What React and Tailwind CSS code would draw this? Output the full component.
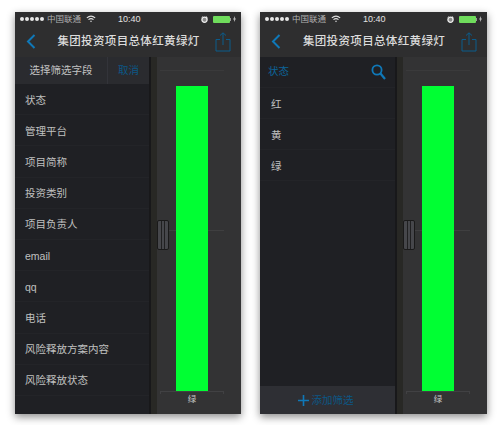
const FONT = { fontFamily: '"Liberation Sans","Noto Sans CJK SC",sans-serif' };

function Signal() {
  return (
    <span className="flex gap-[1px]">
      {[0, 1, 2, 3, 4].map((i) => (
        <span key={i} className="w-[4px] h-[4px] rounded-full bg-[#e8e8e8]" />
      ))}
    </span>
  );
}

function StatusBar() {
  return (
    <div className="h-[14px] flex items-center pl-[5px] pr-[5px] text-[#d8d8d8] shrink-0">
      <div className="flex items-center gap-[3px] w-[90px]">
        <Signal />
        <span className="text-[8.5px] leading-none text-[#b0b0b0] whitespace-nowrap">中国联通</span>
        <svg width="10" height="8" viewBox="0 0 12 9" className="ml-[2px]" fill="none" stroke="#e0e0e0" strokeWidth="1.3">
          <path d="M1 3.2C4 .6 8 .6 11 3.2" />
          <path d="M3 5.2C4.8 3.8 7.2 3.8 9 5.2" />
          <path d="M6 8.4 4.8 7c.7-.5 1.7-.5 2.4 0z" fill="#e0e0e0" stroke="none" />
        </svg>
      </div>
      <span className="flex-1 text-[9px] text-[#e2e2e2] ml-[8px] leading-none">10:40</span>
      <div className="flex items-center">
        <svg width="7" height="7" viewBox="0 0 7 7" className="mr-[5px]">
          <circle cx="3.5" cy="3.7" r="2.6" fill="#8a8a8a" stroke="#ececec" strokeWidth="1.3" />
          <path d="M.6 1.6 1.8.6M6.4 1.6 5.2.6" stroke="#ececec" strokeWidth="0.9" />
        </svg>
        <span className="w-[17px] h-[7px] bg-[#6fdc5c] rounded-[1px]" />
        <span className="w-[1px] h-[3px] bg-[#999] mr-[2px]" />
        <svg width="3" height="6" viewBox="0 0 3 6">
          <path d="M2 0 0 3.4h1.1L1 6l2-3.4H1.9z" fill="#bdbdbd" />
        </svg>
      </div>
    </div>
  );
}

function NavBar() {
  return (
    <div className="h-[31px] flex items-center bg-[#2e2e2f] shrink-0">
      <svg width="10" height="15" viewBox="0 0 10 15" className="ml-[11px] shrink-0" fill="none" stroke="#0f78b8" strokeWidth="2">
        <path d="M8.5 1 2 7.5 8.5 14" />
      </svg>
      <div className="flex-1 text-center text-[#dcdcdc] text-[11.5px] font-medium tracking-[0.35px] whitespace-nowrap pl-[6px]">
        集团投资项目总体红黄绿灯
      </div>
      <svg width="16" height="20" viewBox="0 0 16 20" className="mr-[10px] shrink-0" fill="none" stroke="#0b5c8c" strokeWidth="1">
        <path d="M5 7.5H1v11.5h14V7.5h-4" />
        <path d="M8 13V1M5 3.5 8 .8l3 2.7" />
      </svg>
    </div>
  );
}

function Chart() {
  return (
    <div className="flex-1 flex bg-[#333334] min-w-0">
      <div className="w-[8px] bg-[#282825] border-l-2 border-[#18181a] shrink-0 relative">
        <div className="absolute left-[6px] top-[163px] w-[12px] h-[30px] bg-[#46474b] border border-[#1a1a1a] rounded-[2px] flex justify-evenly z-10">
          <span className="w-[1px] h-full bg-[#202021]" />
          <span className="w-[1px] h-full bg-[#202021]" />
        </div>
      </div>
      <div className="flex-1 relative">
        <div className="absolute left-[3px] top-[13px] w-[64px] border-t border-[#3a3a3b]" />
        <div className="absolute left-[3px] top-[173px] w-[64px] border-t border-[#3f3f40]" />
        <div className="absolute left-[19px] top-[29px] w-[32px] h-[305px] bg-[#00ff33]" />
        <div className="absolute left-[3px] top-[334px] w-[64px] h-[3px] border-t border-l border-r border-[#414143]" />
        <div className="absolute left-[19px] top-[336px] w-[32px] text-center text-[8.5px] leading-[12px] text-[#c4c4c4]">绿</div>
      </div>
    </div>
  );
}

function LeftPanel() {
  const rows = ["状态", "管理平台", "项目简称", "投资类别", "项目负责人", "email", "qq", "电话", "风险释放方案内容", "风险释放状态"];
  return (
    <div className="w-[134px] shrink-0 flex flex-col bg-[#1f2024]">
      <div className="h-[27px] flex items-center bg-[#2a2b2f] shrink-0">
        <div className="flex-1 h-full flex items-center justify-center text-[10.5px] text-[#c2c2c2] border-r border-[#33343a]">选择筛选字段</div>
        <div className="w-[41px] text-center text-[10.5px] text-[#0c5786]">取消</div>
      </div>
      <div className="flex flex-col">
        {rows.map((r) => (
          <div key={r} className="h-[31.2px] flex items-center pl-[10px] pt-[3px] text-[10.5px] text-[#c0c0c0] border-b border-[#232428]">{r}</div>
        ))}
      </div>
    </div>
  );
}

function RightPanel() {
  return (
    <div className="w-[135px] shrink-0 flex flex-col bg-[#1f2024]">
      <div className="h-[31px] flex items-center justify-between pl-[8px] pr-[9px] border-b border-[#232428] shrink-0">
        <span className="text-[10.5px] text-[#0c6499]">状态</span>
        <svg width="15" height="16" viewBox="0 0 15 16" fill="none" stroke="#0f78b8" strokeWidth="1.8">
          <circle cx="6" cy="6" r="4.6" />
          <path d="M9.5 9.5 14 15" strokeWidth="2.2" />
        </svg>
      </div>
      {["红", "黄", "绿"].map((r) => (
        <div key={r} className="h-[31px] flex items-center pl-[11px] pt-[3px] text-[10.5px] text-[#c0c0c0] border-b border-[#232428]">{r}</div>
      ))}
      <div className="flex-1" />
      <div className="h-[28px] shrink-0 flex items-center justify-center gap-[3px] bg-[#2e2f34] pr-[4px]">
        <svg width="11" height="11" viewBox="0 0 11 11" stroke="#0f78b8" strokeWidth="1.6">
          <path d="M5.5 0v11M0 5.5h11" />
        </svg>
        <span className="text-[10.5px] text-[#0c5786] pt-[2px]">添加筛选</span>
      </div>
    </div>
  );
}

function Phone({ children, width }) {
  return (
    <div className={`${width} h-[402px] flex flex-col bg-[#2e2e2f] shadow-[0_3px_8px_rgba(0,0,0,0.45)] shrink-0`}>
      <StatusBar />
      <NavBar />
      <div className="flex-1 flex min-h-0">
        {children}
        <Chart />
      </div>
    </div>
  );
}

export default function App() {
  return (
    <div className="w-[500px] h-[425px] bg-white flex pl-[15px] pt-[12px] gap-[19px] overflow-hidden" style={FONT}>
      <Phone width="w-[226px]">
        <LeftPanel />
      </Phone>
      <Phone width="w-[227px]">
        <RightPanel />
      </Phone>
    </div>
  );
}
